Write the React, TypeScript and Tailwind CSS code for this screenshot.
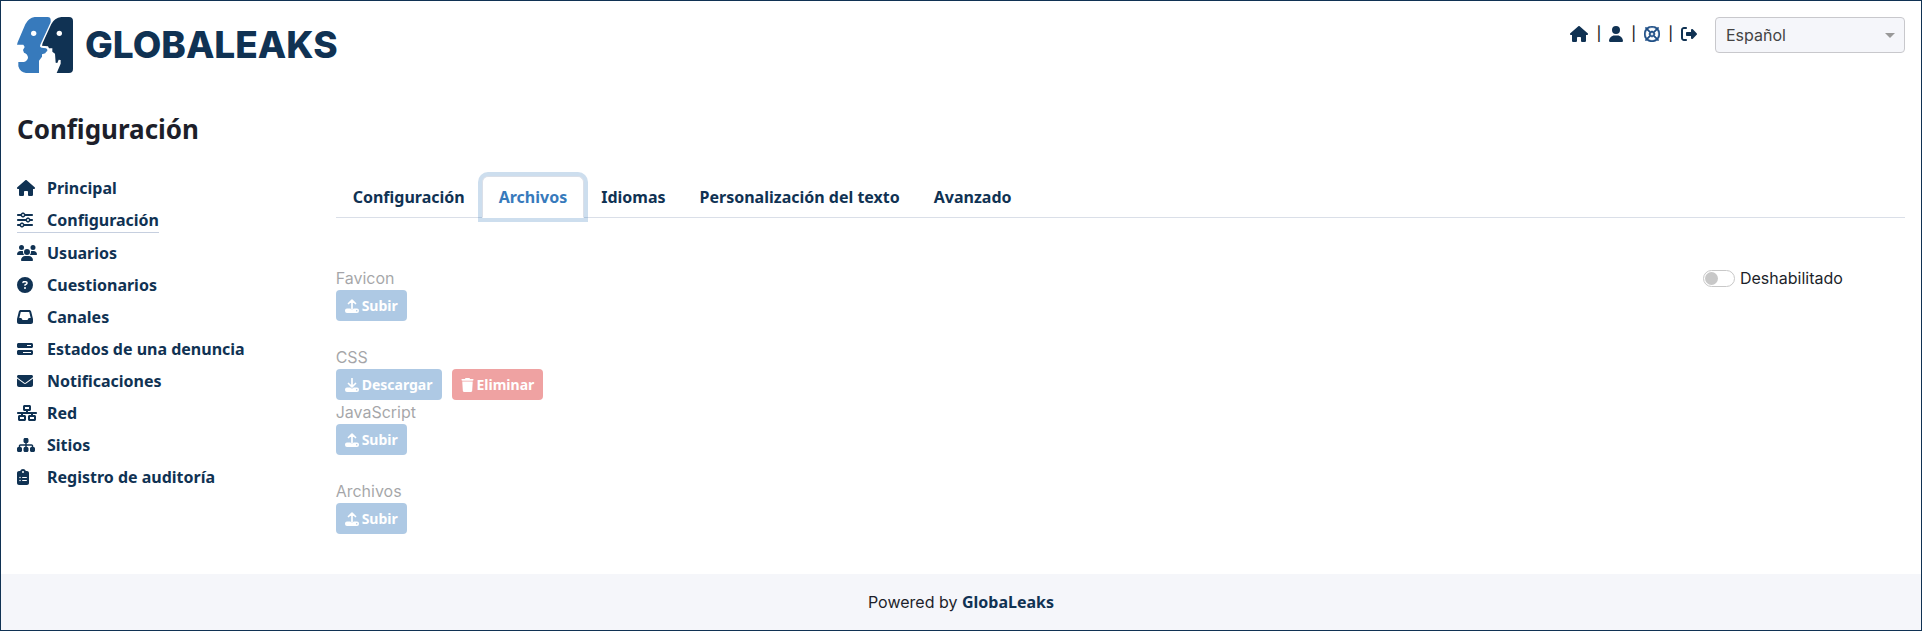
import type { ReactNode } from "react";
import type { IconType } from "react-icons";
import {
  FaBarsProgress,
  FaCircleQuestion,
  FaClipboardList,
  FaEnvelope,
  FaHouse,
  FaInbox,
  FaNetworkWired,
  FaRegLifeRing,
  FaRightFromBracket,
  FaSitemap,
  FaSliders,
  FaTrash,
  FaUser,
  FaUsers,
} from "react-icons/fa6";

const menu: { label: string; icon: IconType; size: string; active?: boolean }[] = [
  { label: "Principal", icon: FaHouse, size: "h-4 w-[18px]" },
  { label: "Configuración", icon: FaSliders, size: "h-4 w-4", active: true },
  { label: "Usuarios", icon: FaUsers, size: "h-4 w-5" },
  { label: "Cuestionarios", icon: FaCircleQuestion, size: "h-4 w-4" },
  { label: "Canales", icon: FaInbox, size: "h-4 w-4" },
  { label: "Estados de una denuncia", icon: FaBarsProgress, size: "h-4 w-4" },
  { label: "Notificaciones", icon: FaEnvelope, size: "h-4 w-4" },
  { label: "Red", icon: FaNetworkWired, size: "h-4 w-5" },
  { label: "Sitios", icon: FaSitemap, size: "h-4 w-[18px]" },
  { label: "Registro de auditoría", icon: FaClipboardList, size: "h-4 w-3" },
];

const tabs = ["Configuración", "Archivos", "Idiomas", "Personalización del texto", "Avanzado"];

function Logo() {
  return (
    <a href="#/" aria-label="GlobaLeaks" className="flex items-center gap-3 text-[#103253]">
      <svg viewBox="51 51 168 168" className="size-14" aria-hidden="true">
        <path
          fill="#377abc"
          d="M104 51H143Q152 51 152 60V67L121 134Q118 141 125 143L138 145Q143 147 142 153L138 156L136 160L126 163V170L117 182V219H78Q60 217 55 199V186H72Q84 182 84 172Q83 162 72 158L69 150L74 141L70 134H51L53 127L76 73Q86 53 104 51Z"
        />
        <path
          fill="#103253"
          d="M184 51H207Q219 51 219 63V207Q219 219 207 219H170L182 191V180L176 179L172 189L167 188L165 161L157 155V145H147L144 139L126 137L128 129L154 72Q163 54 184 51Z"
        />
        <circle cx="101" cy="100" r="8" fill="white" />
        <circle cx="178" cy="100" r="8" fill="white" />
      </svg>
      <span className="font-['Inter',sans-serif] text-[37px] leading-10 font-extrabold">GLOBALEAKS</span>
    </a>
  );
}

function TransferIcon({ up = false }: { up?: boolean }) {
  return (
    <svg viewBox="0 0 14 14" className="size-3.5" fill="none" aria-hidden="true">
      <path
        d={up ? "M7 9.8V1.2M3.5 4.5L7 1.1L10.5 4.5" : "M7 0.5V8.7M3.5 5.5L7 8.9L10.5 5.5"}
        stroke="currentColor"
        strokeWidth="1.7"
        strokeLinecap="round"
        strokeLinejoin="round"
      />
      <path
        fill="currentColor"
        fillRule="evenodd"
        d="M2 9.4H5.4A1.7 1.7 0 0 0 8.6 9.4H12A2 2 0 0 1 14 11.4V12A2 2 0 0 1 12 14H2A2 2 0 0 1 0 12V11.4A2 2 0 0 1 2 9.4ZM11.7 11A.7.7 0 1 0 11.7 12.4A.7.7 0 1 0 11.7 11Z"
      />
    </svg>
  );
}

function FileButton({ icon, children, danger = false }: { icon: ReactNode; children: string; danger?: boolean }) {
  return (
    <button
      type="button"
      className={`flex items-center gap-[3px] rounded px-[9px] py-[5px] font-['Noto_Sans',sans-serif] text-sm leading-[21px] font-bold text-white ${
        danger ? "bg-[#d91919]" : "bg-[#377abc]"
      }`}
    >
      {icon}
      {children}
    </button>
  );
}

function FileRow({ title, children }: { title: string; children: ReactNode }) {
  return (
    <div>
      <div>{title}</div>
      <div className="flex gap-2.5">{children}</div>
    </div>
  );
}

function Separator() {
  return <span className="text-sm font-medium text-[#1d1f2a]">|</span>;
}

export default function App() {
  return (
    <div className="flex min-h-screen flex-col border border-[#103253] bg-white font-['Inter',sans-serif] text-base text-[#1d1f2a]">
      <header className="flex items-start justify-between p-4">
        <Logo />
        <div className="flex items-start gap-[18px]">
          <nav className="flex h-[34px] items-center gap-2 text-[#103253]">
            <a href="#/" aria-label="Inicio"><FaHouse className="h-4 w-[18px]" /></a>
            <Separator />
            <a href="#/preferences" aria-label="Preferencias"><FaUser className="h-4 w-3.5" /></a>
            <Separator />
            <a href="#/support" aria-label="Ayuda" className="text-[#1f4f86]">
              <FaRegLifeRing className="stroke-current stroke-[16]" />
            </a>
            <Separator />
            <a href="#/logout" aria-label="Salir"><FaRightFromBracket /></a>
          </nav>
          <div className="relative">
            <select
              aria-label="Idioma"
              className="h-9 w-[190px] appearance-none rounded border border-[#c8c8cc] bg-[#f5f6fa] px-2.5 text-[#444]"
            >
              <option>Español</option>
            </select>
            <span className="pointer-events-none absolute top-4 right-2.5 border-x-5 border-t-5 border-x-transparent border-t-[#999]" />
          </div>
        </div>
      </header>

      <h1 className="mt-6 px-4 font-['Noto_Sans',sans-serif] text-[26px] leading-8 font-bold">Configuración</h1>

      <div className="mt-[31px] grid grid-cols-12 gap-6 px-4 pb-10">
        <nav className="col-span-2 flex flex-col items-start gap-2 font-['Noto_Sans',sans-serif] font-bold text-[#103253]">
          {menu.map(({ label, icon: Icon, size, active }) => (
            <a
              key={label}
              href="#/admin"
              className={active ? "flex items-center border-b border-[#c6cfdf]" : "flex items-center"}
            >
              <span className="w-[30px]">
                <Icon className={size} />
              </span>
              {label}
            </a>
          ))}
        </nav>

        <main className="col-span-10">
          <div role="tablist" className="flex border-b border-[#dadfe8] font-['Noto_Sans',sans-serif] font-bold text-[#103253]">
            {tabs.map((tab) => (
              <button
                key={tab}
                type="button"
                role="tab"
                aria-selected={tab === "Archivos"}
                className={
                  tab === "Archivos"
                    ? "-mb-px rounded-t-md border border-[#dadfe8] border-b-white bg-white px-4 py-2 text-[#377abc] ring-4 ring-[#377abc]/25"
                    : "-mb-px border border-transparent px-4 py-2"
                }
              >
                {tab}
              </button>
            ))}
          </div>

          <div className="mt-12 flex justify-between">
            <fieldset disabled className="flex flex-col opacity-40">
              <FileRow title="Favicon">
                <FileButton icon={<TransferIcon up />}>Subir</FileButton>
              </FileRow>
              <div className="mt-6">
                <FileRow title="CSS">
                  <FileButton icon={<TransferIcon />}>Descargar</FileButton>
                  <FileButton danger icon={<FaTrash className="h-3.5 w-[13px]" />}>Eliminar</FileButton>
                </FileRow>
                <FileRow title="JavaScript">
                  <FileButton icon={<TransferIcon up />}>Subir</FileButton>
                </FileRow>
              </div>
              <div className="mt-6">
                <FileRow title="Archivos">
                  <FileButton icon={<TransferIcon up />}>Subir</FileButton>
                </FileRow>
              </div>
            </fieldset>
            <label className="flex h-6 w-[202px] items-center gap-[5px]">
              <input
                type="checkbox"
                role="switch"
                className="h-[17px] w-8 appearance-none rounded-full border border-[#c8c8c8] bg-white p-px before:block before:size-[13px] before:rounded-full before:bg-[#c8c8c8] checked:before:ml-auto"
              />
              Deshabilitado
            </label>
          </div>
        </main>
      </div>

      <footer className="mt-auto bg-[#f5f6fa] p-4 text-center">
        Powered by{" "}
        <a href="#/" className="font-['Noto_Sans',sans-serif] font-bold text-[#103253]">GlobaLeaks</a>
      </footer>
    </div>
  );
}
